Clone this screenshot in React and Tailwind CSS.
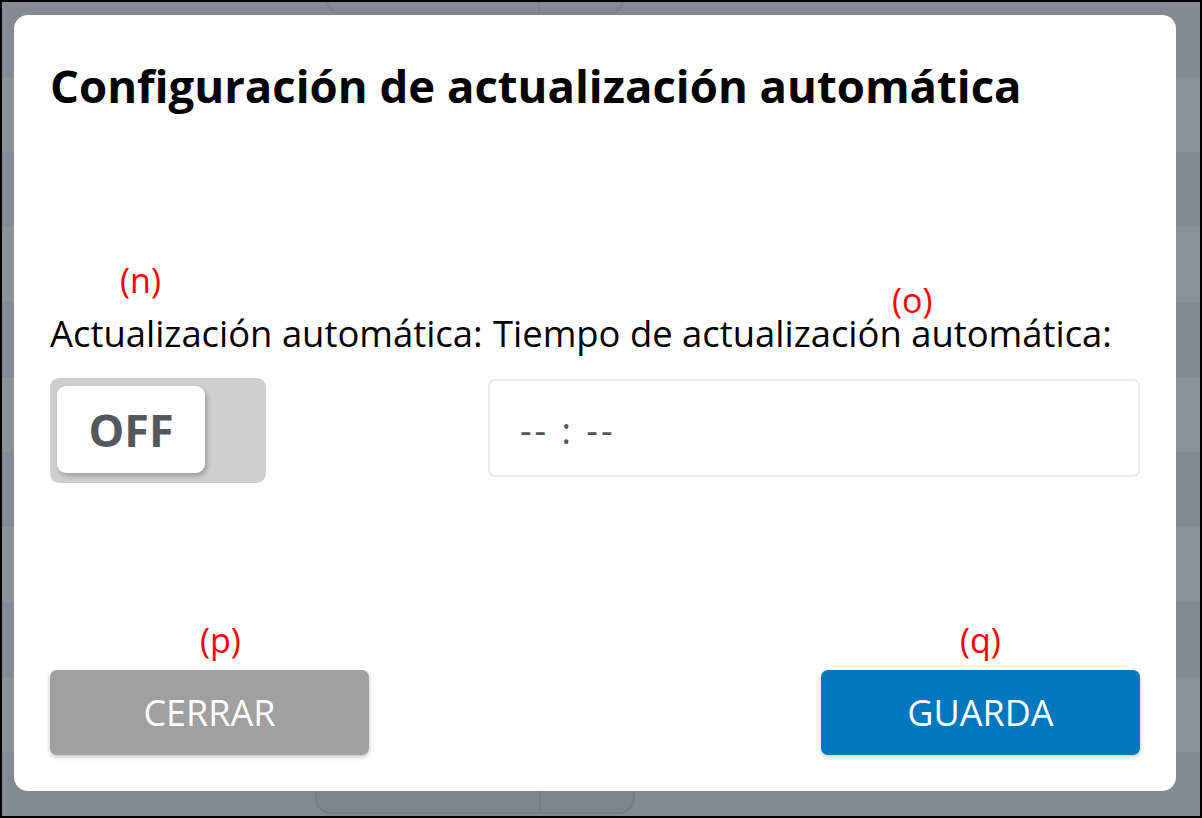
const bands = Array.from({ length: 11 }, (_, i) => i);

const Note = ({ children, className }) => (
  <span className={`absolute text-[34px] leading-[34px] text-[#ff0000] ${className}`}>{children}</span>
);

export default function App() {
  return (
    <div
      className="relative w-[1202px] h-[818px] overflow-hidden border-2 border-black bg-[#888c95]"
      style={{ fontFamily: '"Open Sans", "Noto Sans", sans-serif' }}
    >
      {/* page behind the overlay */}
      <div className="flex flex-col">
        {bands.map((i) => (
          <div key={i} className={`h-[75px] shrink-0 ${i % 2 ? "bg-[#8c9099]" : "bg-[#858993]"}`} />
        ))}
      </div>
      <div className="absolute left-[324px] top-[-40px] w-[298px] h-[52px] rounded-[14px] border-2 border-[#7d818b] flex">
        <div className="w-[212px] border-r-2 border-[#7d818b]" />
      </div>
      <div className="absolute left-[313px] top-[760px] w-[320px] h-[52px] rounded-[16px] border-2 border-[#777b85] bg-[#80848e] flex">
        <div className="w-[224px] border-r-2 border-[#777b85]" />
      </div>

      {/* dialog */}
      <div className="absolute left-[12px] top-[13px] w-[1162px] h-[776px] rounded-[14px] bg-white flex flex-col px-[36px] pt-[42px] pb-[36px] text-black">
        <h2 className="text-[45.5px] leading-[56px] font-bold whitespace-nowrap">Configuración de actualización automática</h2>

        <div className="mt-[200px] flex">
          <div className="w-[438px] shrink-0 flex flex-col">
            <label className="text-[36.4px] leading-[40px] whitespace-nowrap">Actualización automática:</label>
            <button className="mt-[25px] w-[216px] h-[105px] rounded-[9px] bg-[#cfcfcf] pl-[7px] pt-[8px] flex">
              <span className="w-[148px] h-[87px] rounded-[9px] bg-white shadow-[2px_3px_5px_rgba(0,0,0,0.25)] flex items-center justify-center text-[45px] font-bold text-[#54575c]">
                OFF
              </span>
            </button>
          </div>
          <div className="flex-1 flex flex-col">
            <label className="pl-[5px] text-[36.4px] leading-[40px] whitespace-nowrap">Tiempo de actualización automática:</label>
            <div className="mt-[26px] h-[98px] rounded-[7px] border-2 border-[#ebebeb] flex items-center pl-[30px] pt-[6px] text-[36px] tracking-[3px] text-[#555]">
              -- : --
            </div>
          </div>
        </div>

        <div className="mt-auto flex justify-between">
          <button className="w-[319px] h-[85px] rounded-[7px] bg-[#a0a0a0] shadow-[0_2px_4px_rgba(0,0,0,0.25)] text-white text-[36px] uppercase">
            Cerrar
          </button>
          <button className="w-[319px] h-[85px] rounded-[7px] bg-[#0077be] shadow-[0_2px_4px_rgba(0,0,0,0.2)] text-white text-[36px] uppercase">
            Guarda
          </button>
        </div>
      </div>

      {/* annotations */}
      <Note className="left-[118px] top-[261px]">(n)</Note>
      <Note className="left-[890px] top-[281px]">(o)</Note>
      <Note className="left-[198px] top-[621px]">(p)</Note>
      <Note className="left-[958px] top-[621px]">(q)</Note>
    </div>
  );
}
